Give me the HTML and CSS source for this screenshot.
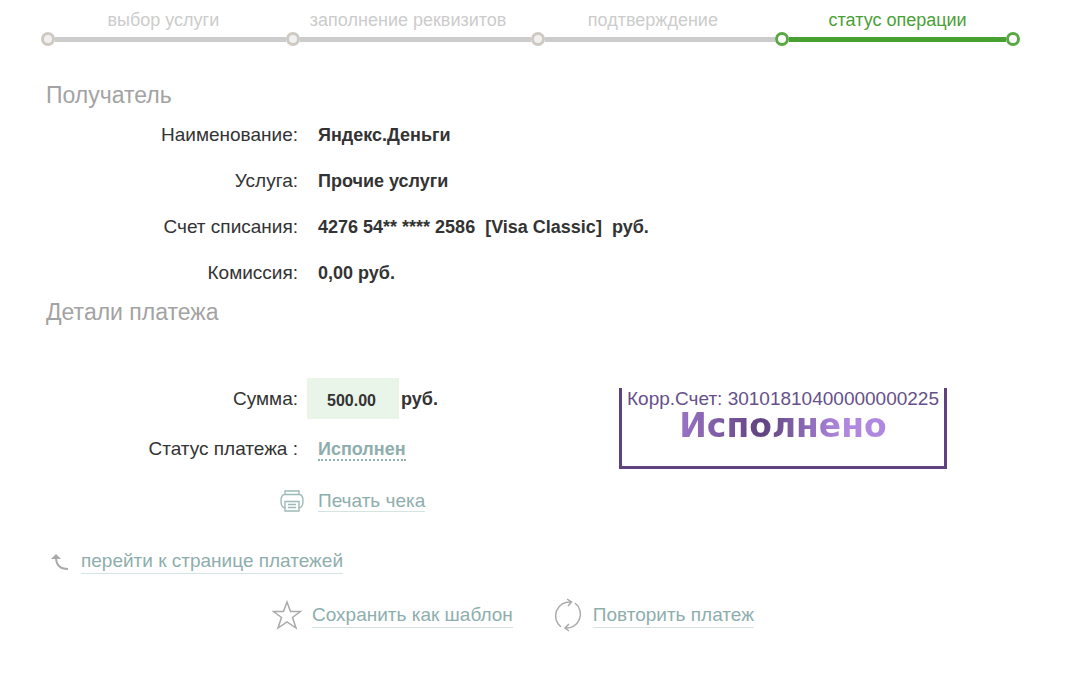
FILE: index.html
```
<!DOCTYPE html>
<html lang="ru">
<head>
  <meta charset="utf-8">
  <title>Статус операции</title>
  <link rel="stylesheet" href="styles.css">
</head>
<body>
  <ol class="steps">
    <li class="step">
      <span class="step-name">выбор услуги</span>
      <span class="rail"><i class="dot"></i><i class="line"></i></span>
    </li>
    <li class="step">
      <span class="step-name">заполнение реквизитов</span>
      <span class="rail"><i class="dot"></i><i class="line"></i></span>
    </li>
    <li class="step">
      <span class="step-name">подтверждение</span>
      <span class="rail"><i class="dot"></i><i class="line"></i></span>
    </li>
    <li class="step active">
      <span class="step-name">статус операции</span>
      <span class="rail"><i class="dot"></i><i class="line"></i><i class="dot"></i></span>
    </li>
  </ol>

  <main class="content">
    <h2>Получатель</h2>
    <dl class="rows">
      <dt>Наименование:</dt>
      <dd>Яндекс.Деньги</dd>
      <dt>Услуга:</dt>
      <dd>Прочие услуги</dd>
      <dt>Счет списания:</dt>
      <dd>4276 54** **** 2586&nbsp; [Visa Classic]&nbsp; руб.</dd>
      <dt>Комиссия:</dt>
      <dd>0,00 руб.</dd>
    </dl>

    <h2>Детали платежа</h2>
    <div class="details">
      <div class="payment">
        <label class="caption" for="amount">Сумма:</label>
        <div class="sum"><input id="amount" class="amount" type="text" value="500.00" readonly>руб.</div>
        <span class="caption">Статус платежа :</span>
        <div><a href="#" class="status">Исполнен</a></div>
        <svg class="icon-print" width="24" height="22" viewBox="0 0 24 22" fill="none" stroke="#9dbab8" stroke-width="1.4">
          <path d="M5 4.500V1h14v3.500M5 18Q1 17.500 1 11Q1 4.500 5 4.500h14Q23 4.500 23 11Q23 17.500 19 18"/>
          <path d="M5 11.500h14v9.500H5zM8 14.500h8M8 17.500h8"/>
        </svg>
        <div><a href="#" class="link">Печать чека</a></div>
      </div>
      <div class="stamp">
        <span class="stamp-account">Корр.Счет: 30101810400000000225</span>
        <strong class="stamp-text">Исполнено</strong>
      </div>
    </div>

    <div class="back">
      <svg width="20" height="18" viewBox="0 0 20 18" fill="none" stroke="#aaa" stroke-width="2">
        <path d="M6 4Q6 16 18 16"/>
        <path d="M6 1L1 6h10z" fill="#aaa" stroke="none"/>
      </svg>
      <a href="#" class="link">перейти к странице платежей</a>
    </div>

    <div class="actions">
      <div class="action">
        <svg width="30" height="30" viewBox="0 0 30 30" fill="none" stroke="#aaa" stroke-width="1.500">
          <path d="M15 2L18.500 11.500H28.500L20.500 17.500L24 28L15 22L6 28L9.500 17.500L1.500 11.500H11.500Z"/>
        </svg>
        <a href="#" class="link">Сохранить как шаблон</a>
      </div>
      <div class="action">
        <svg width="30" height="34" viewBox="0 0 30 34" fill="none" stroke="#aaa" stroke-width="1.500">
          <path d="M8 29A14 14 0 0 1 18 4M14 1L18.500 4L15 8"/>
          <path d="M22 5A14 14 0 0 1 12 30M16 26L12 30L16 33"/>
        </svg>
        <a href="#" class="link">Повторить платеж</a>
      </div>
    </div>
  </main>
</body>
</html>
```
FILE: styles.css
```
body {
  margin: 0;
  background-color: #fff;
  color: #333;
  font-family: "Liberation Sans", Arial, sans-serif;
  font-size: 19px;
  line-height: 24px;
}

/* progress bar */
.steps {
  display: grid;
  grid-template-columns: repeat(4, 1fr);
  list-style: none;
  margin: 0;
  padding: 8px 49px 0 41px;
  color: #ccc;
  font-size: 18px;
}

.step {
  text-align: center;
}

.step-name {
  display: block;
}

.rail {
  display: flex;
  align-items: center;
}

.dot {
  box-sizing: border-box;
  width: 14px;
  height: 14px;
  border: 3px solid #cec9c1;
  border-radius: 50%;
  background-color: #f0f0f0;
}

.line {
  flex: 1;
  height: 5px;
  background-color: #ccc;
}

.active {
  color: #4aa037;
}

.active .dot {
  border-color: #58a944;
  background-color: #fff;
}

.active .line {
  background-color: #48a030;
}

.content {
  padding: 33px 46px;
}

h2 {
  margin: 0;
  color: #a3a3a3;
  font-size: 23px;
  font-weight: normal;
  line-height: 32px;
}

/* caption on the left, value on the right */
.rows,
.payment {
  display: grid;
  grid-template-columns: 252px 1fr;
  column-gap: 20px;
}

.rows {
  row-gap: 22px;
  margin: 12px 0 11px;
}

dt,
.caption {
  text-align: right;
}

dd {
  margin: 0;
  font-size: 18px;
  font-weight: bold;
}

.details {
  display: flex;
  align-items: flex-start;
  margin-top: 49px;
}

.payment {
  flex: 0 0 573px;
  grid-template-rows: 43px 58px 46px;
  align-items: center;
}

.sum {
  display: flex;
  align-items: center;
  gap: 2px;
  margin-left: -11px;
  font-size: 18px;
  font-weight: bold;
}

.amount {
  box-sizing: border-box;
  width: 92px;
  height: 41px;
  margin: 0;
  padding: 4px 20px 0;
  border: none;
  background-color: #eaf5e9;
  color: #333;
  font: bold 16px "Liberation Sans", Arial, sans-serif;
}

.status {
  border-bottom: 2px dotted #8fb0ae;
  color: #8eaead;
  font-size: 18px;
  font-weight: bold;
  text-decoration: none;
}

.link {
  border-bottom: 1px solid #d5e3e1;
  color: #8eaead;
  text-decoration: none;
}

.link:hover {
  border-color: #8eaead;
}

.icon-print {
  justify-self: end;
  margin-right: -6px;
}

/* bank stamp */
.stamp {
  box-sizing: border-box;
  width: 328px;
  height: 81px;
  margin-top: 11px;
  border: 3px solid #5f4380;
  border-top: none;
  color: #66508a;
  text-align: center;
}

.stamp-account {
  display: block;
  font-size: 19px;
  line-height: 22px;
}

.stamp-text {
  display: block;
  width: fit-content;
  margin: 0 auto;
  background: linear-gradient(90deg, #9a74c6, #60437f 40%, #b088e0 78%);
  background-clip: text;
  -webkit-background-clip: text;
  color: transparent;
  font-family: "DejaVu Sans", Verdana, sans-serif;
  font-size: 33px;
  line-height: 32px;
}

.back {
  display: flex;
  align-items: center;
  gap: 11px;
  margin: 25px 0 24px 4px;
}

.actions {
  display: flex;
  gap: 40px;
  margin-left: 226px;
}

.action {
  display: flex;
  align-items: center;
  gap: 10px;
}
```
